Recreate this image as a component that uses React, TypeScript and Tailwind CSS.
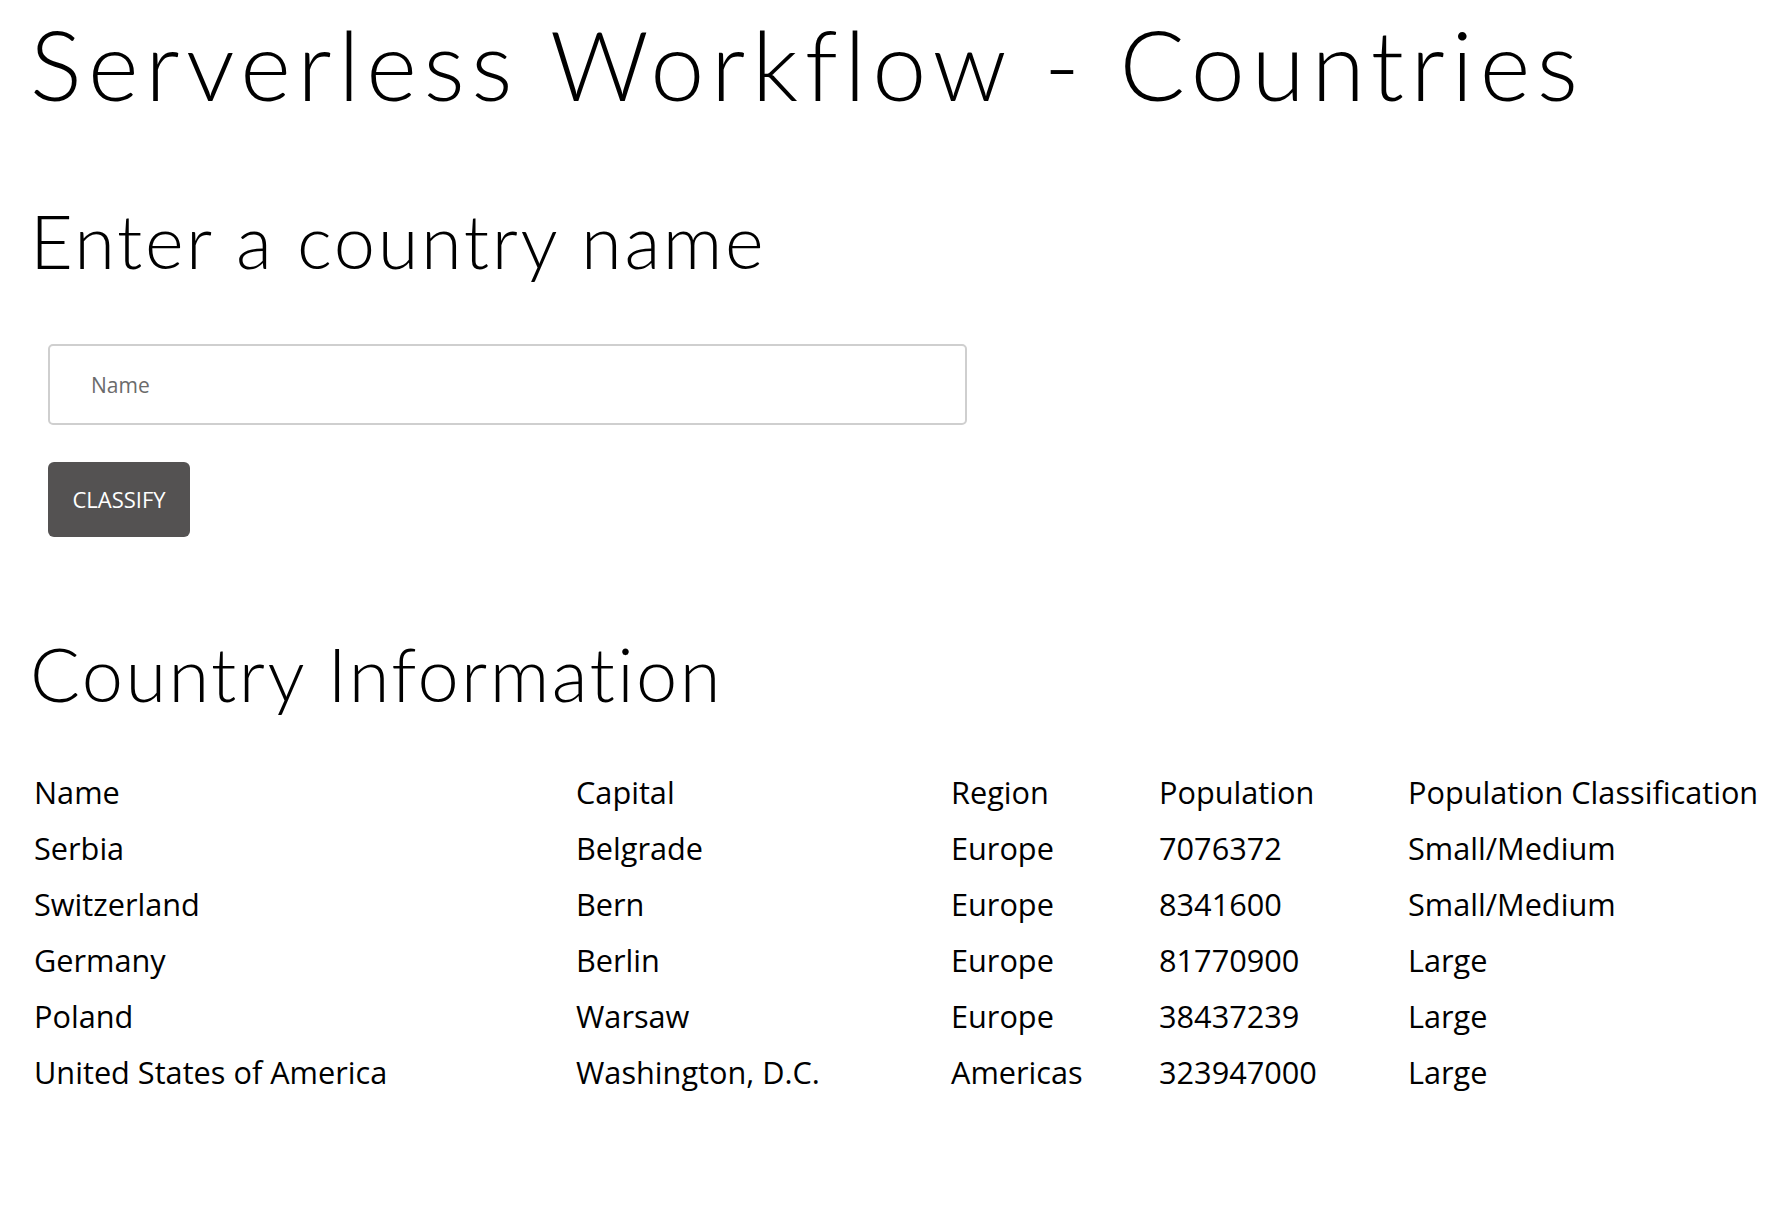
const countries = [
  { name: 'Serbia', capital: 'Belgrade', region: 'Europe', population: '7076372', classification: 'Small/Medium' },
  { name: 'Switzerland', capital: 'Bern', region: 'Europe', population: '8341600', classification: 'Small/Medium' },
  { name: 'Germany', capital: 'Berlin', region: 'Europe', population: '81770900', classification: 'Large' },
  { name: 'Poland', capital: 'Warsaw', region: 'Europe', population: '38437239', classification: 'Large' },
  { name: 'United States of America', capital: 'Washington, D.C.', region: 'Americas', population: '323947000', classification: 'Large' },
];

export default function App() {
  return (
    <div className="min-h-screen bg-white text-black pl-[32px] pt-[6px] overflow-hidden">
      <h1 className="-ml-[2px] font-['Lato',sans-serif] font-light text-[97px] leading-[1.2] tracking-[6.6px] whitespace-nowrap">
        Serverless Workflow - Countries
      </h1>

      <h2 className="-ml-[2px] mt-[75px] font-['Lato',sans-serif] font-light text-[74px] leading-[1.2] tracking-[2.6px]">
        Enter a country name
      </h2>

      <div className="mt-[58px] ml-[16px] flex flex-col items-start gap-[37px]">
        <input
          type="text"
          placeholder="Name"
          className="w-[919px] h-[81px] rounded-[5px] border-2 border-[#cfcfcf] bg-white pl-[41px] font-['Open_Sans',sans-serif] text-[21px] text-gray-700 placeholder:text-[#6b6b6b] outline-none"
        />
        <button
          type="button"
          className="w-[142px] h-[75px] rounded-[6px] bg-[#545252] font-['Open_Sans',sans-serif] text-[22px] text-white uppercase"
        >
          Classify
        </button>
      </div>

      <h2 className="-ml-[2px] mt-[93px] font-['Lato',sans-serif] font-light text-[74px] leading-[1.2] tracking-[2.4px]">
        Country Information
      </h2>

      <table className="mt-[45px] ml-[2px] w-[1737px] table-fixed font-['Open_Sans',sans-serif] text-[30.7px] text-left border-collapse">
        <colgroup>
          <col className="w-[542px]" />
          <col className="w-[375px]" />
          <col className="w-[208px]" />
          <col className="w-[249px]" />
          <col className="w-[363px]" />
        </colgroup>
        <thead>
          <tr className="h-[56px]">
            <th className="font-medium p-0">Name</th>
            <th className="font-medium p-0">Capital</th>
            <th className="font-medium p-0">Region</th>
            <th className="font-medium p-0">Population</th>
            <th className="font-medium p-0 whitespace-nowrap">Population Classification</th>
          </tr>
        </thead>
        <tbody>
          {countries.map((c) => (
            <tr key={c.name} className="h-[56px]">
              <td className="p-0">{c.name}</td>
              <td className="p-0">{c.capital}</td>
              <td className="p-0">{c.region}</td>
              <td className="p-0">{c.population}</td>
              <td className="p-0">{c.classification}</td>
            </tr>
          ))}
        </tbody>
      </table>
    </div>
  );
}
